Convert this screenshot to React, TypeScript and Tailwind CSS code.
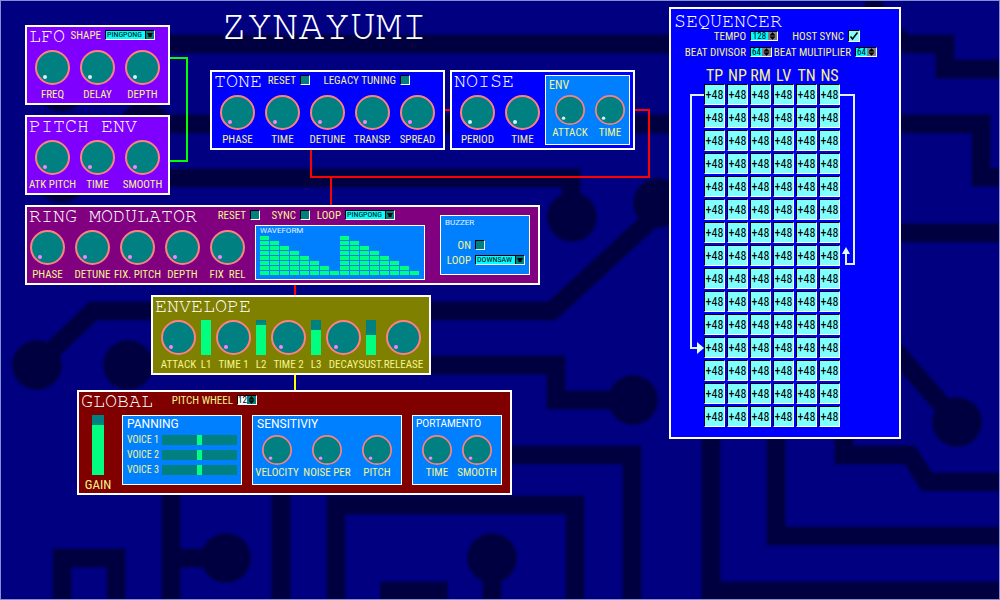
import { useState, type ReactNode } from "react";

type Tone = "pink" | "pale";

function Knob({ label, small = false, tone = "pink", wide = false }: { label: string; small?: boolean; tone?: Tone; wide?: boolean }) {
  const [value, setValue] = useState(0);
  return (
    <label className={`flex flex-none flex-col items-center ${small ? "w-[30px]" : "w-[35px]"} ${wide ? "ml-[5px]" : ""}`}>
      <span className={`relative block ${small ? "size-[30px]" : "size-[35px]"}`}>
        <svg viewBox="0 0 35 35" className="block size-full">
          <circle cx="17.5" cy="17.5" r="16.5" fill="#008080" stroke="#ff8080" strokeWidth="2" />
          <circle cx="10" cy="27" r="2" fill={tone === "pink" ? "#ff80ff" : "#d5f0ff"} transform={`rotate(${value * 2.8} 17.5 17.5)`} />
        </svg>
        <input
          type="range"
          value={value}
          onChange={(e) => setValue(Number(e.target.value))}
          className="absolute inset-0 size-full cursor-pointer opacity-0"
        />
      </span>
      <span className={`whitespace-pre text-[11px] leading-[14px] text-[#f5f58c] ${small ? "mt-px" : "mt-[3px]"}`}>{label}</span>
    </label>
  );
}

function Level({ label, value }: { label: string; value: number }) {
  const [level, setLevel] = useState(value);
  return (
    <label className="flex w-[10px] flex-none flex-col items-center">
      <span className="relative flex h-[35px] w-full flex-col justify-end bg-[#008080]">
        <span className="bg-[#00ff80]" style={{ height: `${(level / 7) * 100}%` }} />
        <input type="range" min={0} max={7} value={level} onChange={(e) => setLevel(Number(e.target.value))} className="absolute inset-0 size-full opacity-0" />
      </span>
      <span className="mt-[3px] whitespace-nowrap text-[11px] leading-[14px] text-[#f5f58c]">{label}</span>
    </label>
  );
}

function Field({ label, className, children }: { label: string; className: string; children: ReactNode }) {
  return (
    <label className={`flex flex-none items-center justify-end gap-[4px] whitespace-nowrap text-[11px] text-[#f5f58c] ${className}`}>
      <span className="pt-[2px] leading-[10px]">{label}</span>
      {children}
    </label>
  );
}

const sunken = "border border-t-black border-l-black border-r-white border-b-white";

function Check() {
  return <input type="checkbox" className={`size-[10px] flex-none appearance-none bg-[#008080] checked:bg-[#00ffff] ${sunken}`} />;
}

function Choice({ value }: { value: string }) {
  return (
    <span className={`relative flex h-[10px] w-[50px] flex-none bg-[#00ffff] ${sunken}`}>
      <select defaultValue={value} className="h-[8px] w-full appearance-none bg-transparent pl-px text-[8px] leading-[8px] text-black outline-none">
        <option>PINGPONG</option>
        <option>DOWNSAW</option>
        <option>UPSAW</option>
      </select>
      <svg viewBox="0 0 9 8" className="pointer-events-none absolute top-0 right-0 h-[8px] w-[9px]">
        <rect width="9" height="8" fill="#000" />
        <rect x="1" y="0" width="8" height="8" fill="#008080" />
        <path d="M2 2H8L6.500 4.500V6H3.500V4.500Z" fill="#000" />
      </svg>
    </span>
  );
}

function Spin({ value, width, plain = false }: { value: string; width: string; plain?: boolean }) {
  return (
    <span className={`flex h-[10px] flex-none ${width} ${plain ? "bg-white" : "bg-[#00ffff]"} ${sunken}`}>
      <input defaultValue={value} inputMode="numeric" className="h-[8px] w-0 min-w-0 flex-1 bg-transparent text-center text-[9px] leading-[8px] text-black outline-none" />
      <svg viewBox="0 0 9 8" className="h-[8px] w-[9px] flex-none">
        <rect width="9" height="8" fill={plain ? "#008080" : "#808080"} />
        <path d="M4.500 0.500L7 3.300H2ZM4.500 7.500L2 4.700H7Z" fill="#000" stroke="#000" strokeWidth="0.600" />
      </svg>
    </span>
  );
}

function Panel({ className, children }: { className: string; children: ReactNode }) {
  return <section className={`flex-none border-2 border-white ${className}`}>{children}</section>;
}

function Title({ className, children }: { className: string; children: ReactNode }) {
  return <h2 className={`flex-none whitespace-nowrap font-['FreeMono','Liberation_Mono',monospace] text-[20px] leading-[18px] text-white ${className}`}>{children}</h2>;
}

function Group({ className, children }: { className: string; children: ReactNode }) {
  return <div className={`flex-none border border-white bg-[#0080ff] ${className}`}>{children}</div>;
}

function Circuit() {
  return (
    <svg viewBox="0 0 1000 600" preserveAspectRatio="xMinYMin slice" className="absolute -inset-px h-[calc(100%+2px)] w-[calc(100%+2px)]" aria-hidden="true">
      <defs>
        <filter id="soft" x="0" y="0" width="1" height="1">
          <feGaussianBlur stdDeviation="1.3" />
        </filter>
      </defs>
      <rect width="1000" height="600" fill="#000080" />
      <g filter="url(#soft)">
        <rect width="1000" height="600" fill="#000080" />
        <g fill="none" stroke="#000040" strokeWidth="19">
          <path d="M100 44H945V69H1000M874 0V15L905 44" />
          <path d="M145 124H981V177H1000" />
          <path d="M61 178H571V217" />
          <path d="M658 203V213L552 311H93L37 365" />
          <path d="M128 365H556V400H633" />
          <path d="M480 455H632V600" />
          <path d="M336 600V505H575V600" />
          <path d="M281 480V600M171 480V600M171 558H226" />
          <path d="M62 600V558H116V600M492 558V600M380 591H448" />
          <path d="M880 233H1000M890 345L957 422" />
          <path d="M844 430V455H910L927 482H1000" />
          <path d="M776 430V536H1000M711 430V591H1000" />
        </g>
        <g fill="#000040">
          <circle cx="61" cy="87" r="25" />
          <circle cx="145" cy="126" r="25" />
          <circle cx="61" cy="178" r="25" />
          <circle cx="572" cy="217" r="25" />
          <circle cx="658" cy="203" r="25" />
          <circle cx="37" cy="365" r="25" />
          <circle cx="128" cy="365" r="25" />
          <circle cx="633" cy="400" r="25" />
          <circle cx="226" cy="558" r="25" />
          <circle cx="492" cy="558" r="25" />
          <circle cx="957" cy="422" r="25" />
        </g>
      </g>
    </svg>
  );
}

function Wires() {
  return (
    <svg viewBox="0 0 1000 600" className="absolute -top-px -left-px h-[600px] w-[1000px]" aria-hidden="true">
      <g fill="none" strokeWidth="2">
        <path d="M168 58H187V161H168" stroke="#00ff00" />
        <path d="M311 148V177H649V110H633M443 110H452M331 177V207M295 283V297" stroke="#ff0000" />
        <path d="M295 373V392" stroke="#ffff00" />
      </g>
    </svg>
  );
}

const wave = [8, 7, 6, 5, 4, 3, 2, 1, 8, 7, 6, 5, 4, 3, 2, 1];
const columns = ["TP", "NP", "RM", "LV", "TN", "NS"];
const steps = Array.from({ length: 15 }, (_, i) => i);

function Sequencer() {
  return (
    <Panel className="h-[432px] w-[232px] bg-[#0000ff]">
      <Title className="pt-[3px] pl-[3px]">SEQUENCER</Title>
      <div className="flex h-[12px]">
        <Field label="TEMPO" className="w-[107px]"><Spin value="128" width="w-[28px]" /></Field>
        <Field label="HOST SYNC" className="w-[82px]">
          <span className="relative block size-[12px] flex-none">
            <input type="checkbox" defaultChecked className={`peer block size-[12px] appearance-none bg-[#008080] checked:bg-[#80ffff] ${sunken}`} />
            <svg viewBox="0 0 12 12" className="pointer-events-none absolute inset-0 hidden peer-checked:block">
              <path d="M2.500 6.500L4.500 9L9.500 2.500" fill="none" stroke="#000" strokeWidth="1.500" />
            </svg>
          </span>
        </Field>
      </div>
      <div className="mt-[4px] flex h-[12px]">
        <Field label="BEAT DIVISOR" className="w-[101px]"><Spin value="64" width="w-[22px]" /></Field>
        <Field label="BEAT MULTIPLIER" className="w-[105px]"><Spin value="64" width="w-[22px]" /></Field>
      </div>
      <div className="mt-[9px] flex pl-[19px]">
        <svg viewBox="0 0 12 360" className="h-[360px] w-[12px] flex-none overflow-visible" aria-hidden="true">
          <path d="M14 28H1V281H8" fill="none" stroke="#e0f0ff" strokeWidth="2" />
          <path d="M7 275L14 281L7 287Z" fill="#e0ffff" />
        </svg>
        <table className="border-separate border-spacing-x-[2px] border-spacing-y-0">
          <thead>
            <tr>
              {columns.map((c) => (
                <th key={c} className="h-[17px] w-[21px] p-0 text-[16px] leading-[17px] font-normal text-[#f5f58c]">
                  <span className="flex justify-center">{c}</span>
                </th>
              ))}
            </tr>
          </thead>
          <tbody>
            {steps.map((s) => (
              <tr key={s}>
                {columns.map((c) => (
                  <td key={c} className="h-[23px] w-[21px] p-0 align-top">
                    <input
                      aria-label={`${c} ${s + 1}`}
                      defaultValue="+48"
                      className={`block h-[21px] w-[21px] bg-[#80ffff] p-0 text-center text-[12px] leading-[19px] text-black outline-none ${sunken}`}
                    />
                  </td>
                ))}
              </tr>
            ))}
          </tbody>
        </table>
        <svg viewBox="0 0 17 360" className="h-[360px] w-[17px] flex-none overflow-visible" aria-hidden="true">
          <path d="M-2 28H12V197H4V186" fill="none" stroke="#e0f0ff" strokeWidth="2" />
          <path d="M0 187L4 180L8 187Z" fill="#e0ffff" />
        </svg>
      </div>
    </Panel>
  );
}

export default function App() {
  return (
    <main className="relative flex min-h-screen items-start gap-[34px] overflow-hidden border border-[#8090d0] bg-[#000080] pt-[6px] pl-[24px] font-['Roboto_Condensed',Roboto,sans-serif]">
      <Circuit />
      <Wires />
      <div className="relative flex-none">
        <div className="flex items-start">
          <div className="flex flex-col gap-[10px] pt-[18px]">
            <Panel className="h-[80px] w-[145px] bg-[#8000ff]">
              <div className="flex h-[23px] items-start pl-[2px]">
                <Title className="w-[36px]">LFO</Title>
                <Field label="SHAPE" className="mt-[2px] w-[90px]"><Choice value="PINGPONG" /></Field>
              </div>
              <div className="flex gap-[10px] pl-[8px]">
                <Knob label="FREQ" tone="pale" /><Knob label="DELAY" tone="pale" /><Knob label="DEPTH" tone="pale" />
              </div>
            </Panel>
            <Panel className="h-[80px] w-[145px] bg-[#8000ff]">
              <Title className="h-[23px] pl-[2px]">PITCH ENV</Title>
              <div className="flex gap-[10px] pl-[8px]">
                <Knob label="ATK PITCH" /><Knob label="TIME" /><Knob label="SMOOTH" />
              </div>
            </Panel>
          </div>
          <div className="ml-[40px]">
            <h1 className="h-[63px] pl-[11px] font-['FreeMono','Liberation_Mono',monospace] text-[43px] leading-[40px] text-white">ZYNAYUMI</h1>
            <div className="flex gap-[5px]">
              <Panel className="h-[80px] w-[235px] bg-[#0000ff]">
                <div className="flex h-[23px] items-start pl-[2px]">
                  <Title className="w-[51px]">TONE</Title>
                  <Field label="RESET" className="mt-[2px] w-[45px]"><Check /></Field>
                  <Field label="LEGACY TUNING" className="mt-[2px] w-[100px]"><Check /></Field>
                </div>
                <div className="flex gap-[10px] pl-[8px]">
                  <Knob label="PHASE" /><Knob label="TIME" /><Knob label="DETUNE" /><Knob label="TRANSP." /><Knob label="SPREAD" />
                </div>
              </Panel>
              <Panel className="flex h-[80px] w-[185px] bg-[#0000ff]">
                <div className="w-[93px]">
                  <Title className="h-[23px] pl-[2px]">NOISE</Title>
                  <div className="flex gap-[10px] pl-[8px]">
                    <Knob label="PERIOD" tone="pale" /><Knob label="TIME" tone="pale" />
                  </div>
                </div>
                <Group className="mt-[3px] h-[70px] w-[85px]">
                  <h3 className="h-[19px] pt-[2px] pl-[3px] text-[12px] leading-[14px] text-[#f5f58c]">ENV</h3>
                  <div className="flex gap-[10px] pl-[9px]">
                    <Knob small label="ATTACK" tone="pale" /><Knob small label="TIME" tone="pale" />
                  </div>
                </Group>
              </Panel>
            </div>
          </div>
        </div>

        <Panel className="mt-[10px] flex h-[80px] w-[515px] bg-[#800080]">
          <div className="w-[398px] flex-none">
            <div className="flex h-[18px] items-start pl-[2px]">
              <Title className="w-[181px]">RING MODULATOR</Title>
              <Field label="RESET" className="mt-[2px] w-[50px]"><Check /></Field>
              <Field label="SYNC" className="mt-[2px] w-[50px]"><Check /></Field>
              <Field label="LOOP" className="mt-[2px] w-[85px]"><Choice value="PINGPONG" /></Field>
            </div>
            <div className="flex justify-between pl-[3px]">
              <div className="flex gap-[10px] pt-[5px]">
                <Knob label="PHASE" /><Knob label="DETUNE" /><Knob label="FIX. PITCH" /><Knob label="DEPTH" /><Knob label="FIX  REL" />
              </div>
              <Group className="h-[55px] w-[170px] px-[4px] font-[Roboto,sans-serif]">
                <h3 className="h-[10px] text-[8px] leading-[10px] text-white/90">WAVEFORM</h3>
                <div className="flex h-[39px] items-end gap-px">
                  {wave.map((n, i) => (
                    <div key={i} className="flex w-[9px] flex-col gap-px">
                      {Array.from({ length: n }, (_, k) => (
                        <span key={k} className="h-[4px] bg-[#00ff80]" />
                      ))}
                    </div>
                  ))}
                </div>
              </Group>
            </div>
          </div>
          <Group className="mt-[8px] ml-[15px] h-[60px] w-[90px]">
            <h3 className="h-[24px] pt-[2px] pl-[4px] font-[Roboto,sans-serif] text-[8px] leading-[10px] text-white/90">BUZZER</h3>
            <Field label="ON" className="h-[10px] w-[44px]"><Check /></Field>
            <Field label="LOOP" className="mt-[5px] h-[10px] w-[84px]"><Choice value="DOWNSAW" /></Field>
          </Group>
        </Panel>

        <Panel className="mt-[10px] ml-[126px] h-[80px] w-[280px] bg-[#808000]">
          <Title className="h-[23px] pl-[2px]">ENVELOPE</Title>
          <div className="flex gap-[5px] pl-[8px]">
            <Knob label="ATTACK" /><Level label="L1" value={7} />
            <Knob label="TIME 1" /><Level label="L2" value={6} />
            <Knob label="TIME 2" /><Level label="L3" value={5} />
            <Knob label="DECAY" /><Level label="SUST." value={4} />
            <Knob label="RELEASE" wide />
          </div>
        </Panel>

        <Panel className="mt-[15px] ml-[52px] h-[105px] w-[435px] bg-[#800000]">
          <div className="flex h-[23px] items-start pl-[2px]">
            <Title className="w-[86px]">GLOBAL</Title>
            <Field label="PITCH WHEEL" className="mt-[2px] w-[90px]"><Spin value="12" width="w-[20px]" plain /></Field>
          </div>
          <div className="flex gap-[10px]">
            <label className="flex w-[33px] flex-col items-center pl-[5px]">
              <span className="relative flex h-[60px] w-[12px] flex-col justify-end bg-[#008080]">
                <span className="h-[50px] bg-[#00ff80]" />
                <input type="range" defaultValue={83} className="absolute inset-0 size-full opacity-0" />
              </span>
              <span className="mt-[2px] text-[13px] leading-[16px] text-[#f5f58c]">GAIN</span>
            </label>
            <Group className="h-[70px] w-[120px]">
              <h3 className="h-[19px] pt-px pl-[4px] font-[Roboto,sans-serif] text-[12px] leading-[14px] text-white">PANNING</h3>
              <div className="flex flex-col gap-[5px] px-[4px]">
                {[1, 2, 3].map((v) => (
                  <label key={v} className="flex h-[10px] items-center justify-between whitespace-nowrap text-[10px] leading-[10px] text-[#f5f58c]">
                    VOICE {v}
                    <span className="relative flex h-[10px] w-[75px] justify-center bg-[#008080]">
                      <span className="w-[5px] bg-[#00ff80]" />
                      <input type="range" className="absolute inset-0 size-full opacity-0" />
                    </span>
                  </label>
                ))}
              </div>
            </Group>
            <Group className="h-[70px] w-[150px]">
              <h3 className="h-[19px] pt-px pl-[4px] font-[Roboto,sans-serif] text-[12px] leading-[14px] text-white">SENSITIVIY</h3>
              <div className="flex gap-[20px] pl-[9px]">
                <Knob small label="VELOCITY" /><Knob small label="NOISE PER" /><Knob small label="PITCH" />
              </div>
            </Group>
            <Group className="h-[70px] w-[90px]">
              <h3 className="h-[19px] pt-px pl-[3px] font-[Roboto,sans-serif] text-[10px] leading-[14px] text-white">PORTAMENTO</h3>
              <div className="flex gap-[10px] pl-[9px]">
                <Knob small label="TIME" /><Knob small label="SMOOTH" />
              </div>
            </Group>
          </div>
        </Panel>
      </div>
      <div className="relative"><Sequencer /></div>
    </main>
  );
}
